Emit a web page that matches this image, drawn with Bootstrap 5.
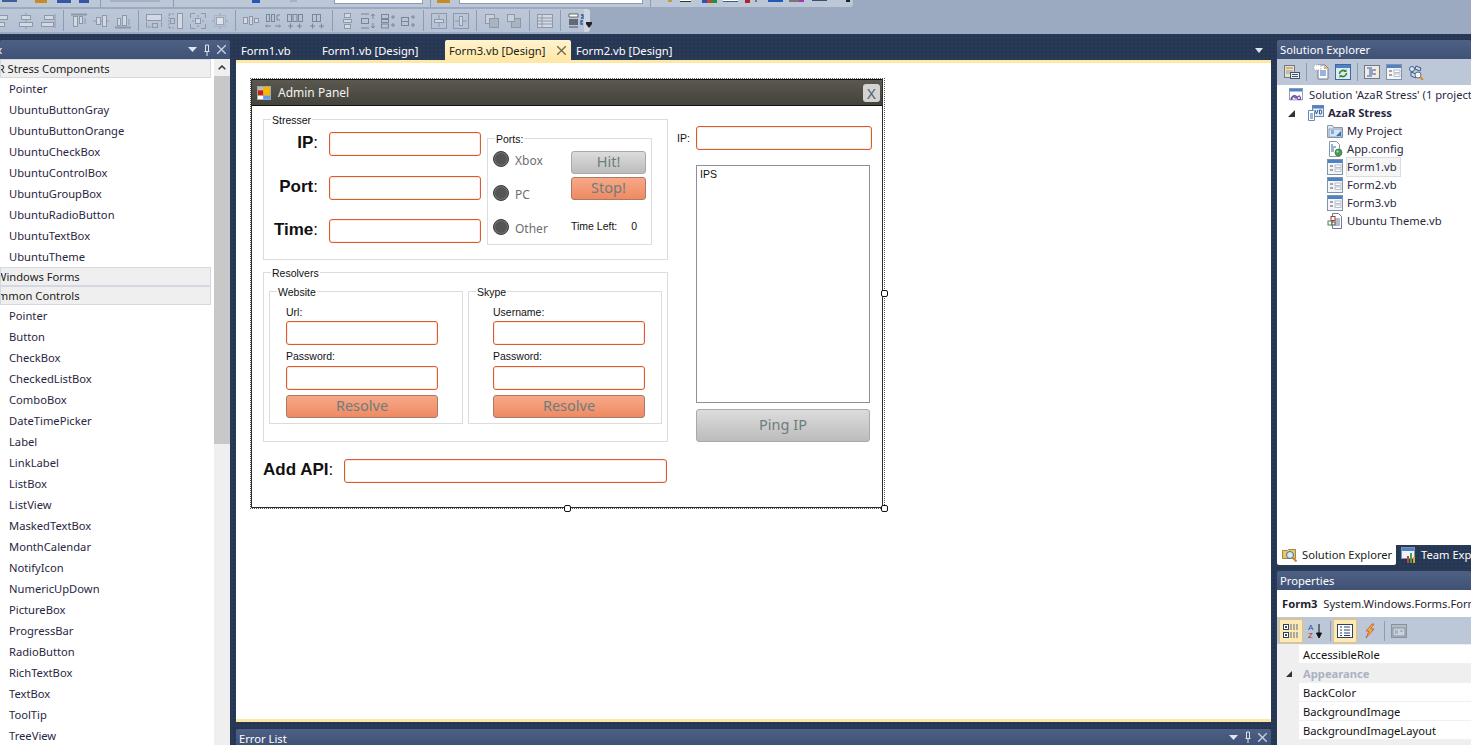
<!DOCTYPE html>
<html lang="en">
<head>
<meta charset="UTF-8">
<title>AzaR Stress - Form3.vb [Design]</title>
<link href="https://cdn.jsdelivr.net/npm/bootstrap@5.3.0/dist/css/bootstrap.min.css" rel="stylesheet">
<style>
html,body{height:745px;overflow:hidden}
body{background:#293a56;font:11.2px/1.2 "Noto Sans",sans-serif;color:#1e1e2e}
svg{display:block;flex:none}

/* top toolbars */
.top-area{height:34px;background:#9caac1;flex:none}
.strip-one{height:7px;width:853px;background:#bcc7d8;border-radius:0 0 3px 0;overflow:hidden;align-items:flex-start}
.strip-one i{display:block;flex:none;height:3px}
.strip-one .one-sep{width:1px;height:7px;background:#8e9cb3}
.strip-one .one-white{height:4px;background:#fff;border:1px solid #8e9cb3;border-top:0}
.s1{width:15px;margin-left:2px;background:#3a5f9a}.strip-one .s1{height:2px}
.s2{width:12px;margin-left:18px;background:#c88a23}
.s3{width:14px;margin-left:10px;background:#3557a5}
.s4{width:10px;margin-left:8px;background:#3557a5}
.s5{margin-left:11px}
.s6{width:50px;margin-left:9px;background:#a5b0c4}.strip-one .s6{height:2px}
.s7{margin-left:13px}
.s8{width:8px;margin-left:78px;background:#2557b8}
.s9{width:7px;margin-left:30px;background:#a5b0c4}.strip-one .s9{height:2px}
.s10{width:89px;margin-left:37px}
.s11{margin-left:7px}
.s12{width:13px;margin-left:6px;background:#c88a23}
.s13{width:184px;margin-left:9px}
.s14{margin-left:7px}
.s15{width:4px;margin-left:17px;background:#c79a45}.strip-one .s15{height:2px}
.s16{width:11px;margin-left:8px;background:#fff;border-bottom:1px solid #333}.strip-one .s16{height:2px}
.s17{width:15px;margin-left:11px;background:linear-gradient(90deg,#2557b8 30%,#d63d2e 30% 60%,#2e8b3e 60%)}
.s18{width:15px;margin-left:6px;background:#fff;border-bottom:1px solid #3b5a8f}.strip-one .s18{height:2px}
.s19{width:5px;margin-left:7px;background:#b3222a}
.s20{width:2px;margin-left:5px;background:#777}.strip-one .s20{height:2px}
.s21{width:15px;margin-left:11px;background:#2557b8}.strip-one .s21{height:2px}
.s22{width:15px;margin-left:6px;background:linear-gradient(90deg,#777 65%,#a23aa0 65%)}.strip-one .s22{height:2px}
.s23{width:15px;margin-left:8px;background:#3b4f75}.strip-one .s23{height:1px}
.s24{width:4px;margin-left:19px;background:#222}.strip-one .s24{height:2px}
.strip-two{height:23px;width:590px;margin-top:2px;background:linear-gradient(#bcc7d8,#b5c1d4);border-radius:0 3px 3px 0;align-items:center}
.tb-sep{width:1px;height:21px;background:#8e9cb3;flex:none;margin:0 7px}
.tb-group{gap:6px}
.tb-first{margin-left:-4px}
.tb-tight{gap:4px}
.tb-more{width:10px;margin-left:auto;align-self:stretch;background:#cdd5e2;border-radius:0 3px 3px 0;position:relative}
.tb-more:after{content:"";position:absolute;left:2px;bottom:4px;border:3px solid transparent;border-top:4px solid #222;border-bottom:0;box-shadow:0 -2px 0 #222}

/* docked windows */
.main-area{flex:1;padding-top:6px;gap:6px;min-height:0;background-image:radial-gradient(#243350 1px,transparent 1px);background-size:4px 4px}
.pane-head{height:19px;background:linear-gradient(#4e6185,#3f5275);color:#fff;line-height:19px;padding-left:3px;border-radius:2px 2px 0 0;flex:none;overflow:hidden;white-space:nowrap}
.pane-tools{gap:6px;margin-left:auto;padding-right:4px;color:#dfe5ee}
.left-pane{width:230px;flex:none}
.tbx-head{padding-left:0}
.tbx-head span{margin-left:-39px}
.tbx-body{min-height:0}
.tbx-list{width:214px;overflow:hidden;background:#fff}
.tbx-group{height:19px;width:211px;line-height:17px;background:#efefef;border:1px solid #d4d8e2;white-space:nowrap;overflow:hidden;color:#222}
.tbx-group span{display:block}
.cut-azar{margin-left:-22px}
.cut-win{margin-left:-5px}
.cut-common{margin-left:-17px}
.tbx-item{height:21px;line-height:21px;padding-left:9px;color:#29263f}
.tbx-scroll{width:16px;background:#efefef}
.tbx-scroll-btn{height:17px;background:#efefef}
.tbx-scroll-thumb{height:368px;background:#c8c8c8}

/* designer */
.center-pane{width:1035px;flex:none}
.doc-tabs{height:20px;color:#fff}
.doc-tab{padding:0 5px;line-height:21px;white-space:nowrap}
.tab-a{width:81px}
.tab-b{width:128px}
.doc-tab-on{width:126px;padding-left:4px;background:linear-gradient(#fff3cf,#ffe8a6);color:#1b1b1b;border-radius:2px 2px 0 0;justify-content:space-between;padding-right:5px}
.doc-body{flex:1;background:#fff;border-top:3px solid #ffe8a6;border-bottom:3px solid #ffe8a6;padding:15px 0 0 14px;min-height:0}
.err-head{margin-top:7px;height:16px;line-height:20px;border-radius:2px 2px 0 0}

.form-sel{width:635px;height:431px;border:1px dotted #555;position:relative}
.grip{position:absolute;width:7px;height:7px;background:#fff;border:1px solid #111;border-radius:2px}
.grip-r{right:-4px;top:211px}
.grip-b{left:313px;bottom:-4px}
.grip-c{right:-4px;bottom:-4px}
.form-win{height:429px;width:632px;border:1px solid #2d2d2d;border-top:0;font-family:"Liberation Sans",sans-serif;font-size:10.5px;color:#111}
.form-title{height:27px;flex:none;background:linear-gradient(#5a584f,#44433c);border:1px solid #111;border-width:1px 0 1px 0;color:#f2f2f2;font:12px "Noto Sans",sans-serif;padding:0 2px 0 5px;gap:7px}
.form-x{width:17px;height:18px;margin-left:auto;background:#d3d3d0;border-radius:3px;color:#4f6273;font:15px/18px "Noto Sans",sans-serif;text-align:center}
.form-left{width:405px;margin-left:11px}
.grp-box{border:1px solid #dcdcdc;position:relative}
.grp-tag{position:absolute;left:7px;top:-6px;background:#fff;padding:0 1px;line-height:12px;white-space:nowrap}
.box-stress{height:141px;margin-top:13px}
.stress-col{padding-top:12px}
.box-ports{width:165px;height:107px;margin:18px 0 0 6px}
.box-resolve{height:170px;margin-top:12px;padding:18px 5px 0}
.box-sub{width:194px;height:133px;padding-left:16px;padding-top:15px}
.box-sub + .box-sub{margin-left:5px;padding-left:24px}
.big-label{font-weight:700;font-size:17px;width:54px;text-align:right;white-space:nowrap;margin-top:-2px}
.big-label span{font-weight:400}
.orange-input.form-control{height:24px;min-height:0;padding:0 4px;border:1.5px solid #dc5a2c;border-radius:3px;box-shadow:inset 0 0 0 1px #fde9e1;font-size:11px}
.w-input{width:152px}
.w-api{width:323px}
.w-ip{width:176px}
.stress-row{align-items:center;gap:11px}
.row-port{margin-top:20px}
.row-time{margin-top:19px}
.ports-left{width:83px;padding:12px 0 0 5px;gap:18px}
.radio-row{height:16px;gap:6px;align-items:center;color:#6e6e6e;font:12px "Noto Sans",sans-serif}
.radio-row span{padding-top:2px}
.radio-dot{width:16px;height:16px;border-radius:50%;background:#555;border:1px solid #3c3c3c;box-shadow:inset 0 0 0 1px #777}
.ports-right{padding-top:12px;width:77px}
.ui-btn.btn{padding:0 0 2px;border-radius:3px;color:#6d7d7d;font:14.5px/1 "Noto Sans",sans-serif;display:block}
.ui-btn.btn:hover{color:#6d7d7d}
.btn-gray.btn{background:linear-gradient(#dcdcdc,#bcbcbc);border:1px solid #a9a9a9}
.btn-orange.btn{background:linear-gradient(#f8a888,#ee8a63);border:1px solid #a97b66}
.btn-port{width:75px;height:23px}
.btn-stop{margin-top:3px}
.btn-res{width:152px;height:23px;margin-top:5px}
.btn-ping{width:174px;height:33px;margin-left:19px}
.time-left{margin-top:20px;line-height:13px}
.time-left span + span{margin-left:14px}
.sub-label{height:11px;line-height:11px;margin-bottom:3px}
.label-2{margin-top:6px;margin-bottom:4px}
.api-row{margin-top:17px}
.api-label{font-size:17px;font-weight:700;width:81px;white-space:nowrap;margin-top:-2px}
.api-label span{font-weight:400}
.form-right{margin-left:9px;width:196px}
.ip-row{margin-top:20px}
.ip-label{width:19px}
.ips-box{width:174px;height:238px;margin:15px 0 6px 19px;border:1px solid #8a8f99;padding:2px 3px;line-height:13px}

/* right side */
.right-pane{width:194px;flex:none}
.sol-tools{height:26px;background:#bcc7d8;gap:6px;padding-left:7px}
.tool-line{width:1px;height:18px;background:#8e9cb3}
.sol-tree{height:460px;background:#fff;padding-top:1px;white-space:nowrap;overflow:hidden}
.tree-row{height:18px;line-height:18px;gap:4px;color:#2a2840;align-items:center}
.tree-root{padding-left:11px;gap:5px}
.tree-proj{margin-left:8px}
.tree-root b{margin-left:-1px}
.tree-leaf{padding-left:50px}
.tree-sel{background:#f6f6f6;outline:1px solid #ddd;padding-right:3px}
.sol-tabs{height:20px;color:#fff;white-space:nowrap;overflow:hidden}
.sol-tab{gap:4px;padding:0 4px 0 5px;line-height:20px;flex:none}
.sol-tab-on{background:#fff;color:#1b1b1b;width:119px;border-radius:0 0 2px 2px}
.prop-head{margin-top:6px}
.prop-obj{height:27px;line-height:27px;background:#fff;padding-left:5px;white-space:nowrap;overflow:hidden}
.prop-tools{height:27px;background:#bcc7d8;gap:3px;padding-left:3px}
.prop-on{background:#fde9b3;outline:1px solid #e6c272;height:22px;width:22px;justify-content:center}
.prop-off{height:22px;width:22px;justify-content:center}
.prop-line{width:1px;height:20px;background:#8e9cb3}
.prop-grid{flex:1;background:#efefef;padding-top:1px}
.prop-row{height:19px;line-height:19px;margin-left:22px;background:#fff;border-bottom:1px solid #f0f0f0;padding-left:4px;white-space:nowrap;color:#111}
.prop-cat{background:#efefef;color:#a9b2c3;font-weight:700;margin-left:0;padding-left:26px;position:relative}
.prop-cat:before{content:"";position:absolute;left:9px;top:7px;border:3px solid transparent;border-right:3px solid #333;border-bottom:3px solid #333}
</style>
</head>
<body class="d-flex flex-column">

<svg width="0" height="0" class="position-absolute">
  <defs>
    <!-- layout toolbar -->
    <symbol id="t-left" viewBox="0 0 16 16"><g fill="none" stroke="#8d98a8"><path d="M1 1v14"/><rect x="2.5" y="2.5" width="9" height="4" fill="#d3d9e2"/><rect x="2.5" y="9.5" width="6" height="4" fill="#d3d9e2"/></g></symbol>
    <symbol id="t-mid" viewBox="0 0 16 16"><g fill="none" stroke="#8d98a8"><path d="M8 0v16"/><rect x="3.5" y="2.5" width="9" height="4" fill="#d3d9e2"/><rect x="1.5" y="9.5" width="13" height="4" fill="#d3d9e2"/></g></symbol>
    <symbol id="t-right" viewBox="0 0 16 16"><g fill="none" stroke="#8d98a8"><path d="M15 1v14"/><rect x="4.5" y="2.5" width="9" height="4" fill="#d3d9e2"/><rect x="1.5" y="9.5" width="12" height="4" fill="#d3d9e2"/></g></symbol>
    <symbol id="t-top" viewBox="0 0 16 16"><g fill="none" stroke="#8d98a8"><path d="M0 1.5h16" stroke-width="2"/><rect x="2.5" y="3.5" width="4" height="10" fill="#d3d9e2"/><rect x="8.5" y="3.5" width="3" height="7" fill="#d3d9e2"/><path d="M14 11V5"/></g></symbol>
    <symbol id="t-vmid" viewBox="0 0 16 16"><g fill="none" stroke="#8d98a8"><path d="M0 8h16"/><rect x="3.5" y="4.5" width="4" height="7" fill="#d3d9e2"/><rect x="9.5" y="2.5" width="4" height="11" fill="#d3d9e2"/></g></symbol>
    <symbol id="t-bot" viewBox="0 0 16 16"><g fill="none" stroke="#8d98a8"><path d="M0 14.5h16" stroke-width="2"/><rect x="2.5" y="5.5" width="3" height="7" fill="#d3d9e2"/><rect x="7.5" y="2.5" width="4" height="10" fill="#d3d9e2"/><path d="M14 12V6"/></g></symbol>
    <symbol id="t-w" viewBox="0 0 16 16"><g fill="none" stroke="#8d98a8"><rect x=".5" y="1.5" width="15" height="6" fill="#d3d9e2"/><path d="M.5 9v5h5M15.5 9v5"/><rect x="6.5" y="10.5" width="5" height="4"/></g></symbol>
    <symbol id="t-h" viewBox="0 0 16 16"><g fill="none" stroke="#8d98a8"><rect x="9.5" y=".5" width="5" height="15" fill="#d3d9e2"/><path d="M1 1h5M1 15h5M1 1v14" stroke-dasharray="2 1"/><rect x="2.5" y="5.5" width="4" height="5"/></g></symbol>
    <symbol id="t-wh" viewBox="0 0 16 16"><g fill="none" stroke="#8d98a8"><path d="M.5 5V.5H5M11 .5h4.500V5M15.500 11v4.500H11M5 15.500H.5V11"/><rect x="5.500" y="5.500" width="5" height="5" fill="#d3d9e2"/><path d="M8 2v2M8 12v2M2 8h2M12 8h2"/></g></symbol>
    <symbol id="t-grid" viewBox="0 0 16 16"><g fill="none" stroke="#9aa5b5"><rect x="2.500" y="2.500" width="11" height="11" stroke-dasharray="1 1"/><rect x="4.500" y="4.500" width="7" height="7" fill="#dfe3ea"/><path d="M8 0v2M8 14v2M0 8h2M14 8h2"/></g></symbol>
    <symbol id="t-hs1" viewBox="0 0 16 16"><g fill="none" stroke="#8d98a8"><rect x=".5" y="4.500" width="4" height="6" fill="#d3d9e2"/><rect x="6.500" y="3.500" width="3" height="8" fill="#d3d9e2"/><rect x="11.500" y="5.500" width="4" height="4" fill="#d3d9e2"/></g></symbol>
    <symbol id="t-hs2" viewBox="0 0 16 16"><g fill="none" stroke="#7b8799"><rect x="1.500" y="1.500" width="3" height="7"/><rect x="6.500" y="1.500" width="3" height="7"/><path d="M15 2h-3v5h3M1 13h5M10 13h5M2 11.500l-1.500 1.500 1.500 1.500M14 11.500l1.500 1.500-1.500 1.500"/></g></symbol>
    <symbol id="t-hs3" viewBox="0 0 16 16"><g fill="none" stroke="#7b8799"><rect x=".5" y="1.500" width="4" height="7"/><rect x="6" y="1.500" width="4" height="7"/><rect x="11.500" y="1.500" width="4" height="7"/><path d="M1 13h5M3.500 10.500v5M10 13h5M12.500 10.500v5"/></g></symbol>
    <symbol id="t-hs4" viewBox="0 0 16 16"><g fill="none" stroke="#7b8799"><rect x="3.500" y="1.500" width="4" height="7"/><rect x="7.500" y="1.500" width="4" height="7"/><path d="M1 13h5M3.500 10.500v5M10 13h5M12.500 10.500v5"/></g></symbol>
    <symbol id="t-vs1" viewBox="0 0 16 16"><g fill="none" stroke="#8d98a8"><rect x="4.500" y=".5" width="6" height="4" fill="#d3d9e2"/><rect x="3.500" y="6.500" width="8" height="3" fill="#d3d9e2"/><rect x="4.500" y="11.500" width="6" height="4" fill="#d3d9e2"/></g></symbol>
    <symbol id="t-vs2" viewBox="0 0 16 16"><g fill="none" stroke="#7b8799"><path d="M1 1h8M1 15h8"/><rect x="1.500" y="5.500" width="7" height="5"/><path d="M13 1v5M13 10v5M11 3l2-2 2 2M11 13l2 2 2-2"/></g></symbol>
    <symbol id="t-vs3" viewBox="0 0 16 16"><g fill="none" stroke="#7b8799"><rect x="1.500" y="1.500" width="7" height="4"/><rect x="1.500" y="6.500" width="7" height="3"/><rect x="1.500" y="11" width="7" height="4"/><path d="M11 4h4M13 2v4M11 12h4M13 10v4"/></g></symbol>
    <symbol id="t-vs4" viewBox="0 0 16 16"><g fill="none" stroke="#7b8799"><rect x="1.500" y="4.500" width="7" height="4"/><rect x="1.500" y="8.500" width="7" height="4"/><path d="M11 4h4M13 2v4M11 12h4M13 10v4"/></g></symbol>
    <symbol id="t-cv" viewBox="0 0 16 16"><g fill="none" stroke="#8d98a8"><rect x=".5" y=".5" width="15" height="15"/><path d="M8 2v12"/><rect x="3.500" y="6.500" width="9" height="3" fill="#d3d9e2"/></g></symbol>
    <symbol id="t-ch" viewBox="0 0 16 16"><g fill="none" stroke="#8d98a8"><rect x=".5" y=".5" width="15" height="15"/><path d="M2 8h12"/><rect x="6.500" y="3.500" width="3" height="9" fill="#d3d9e2"/></g></symbol>
    <symbol id="t-front" viewBox="0 0 16 16"><g stroke="#8d98a8" fill="#c9d0da"><rect x="1.500" y="1.500" width="9" height="9"/><rect x="5.500" y="5.500" width="9" height="9" fill="#aab3c0"/></g></symbol>
    <symbol id="t-back" viewBox="0 0 16 16"><g stroke="#8d98a8" fill="#aab3c0"><rect x="5.500" y="5.500" width="9" height="9"/><rect x="1.500" y="1.500" width="7" height="7" fill="#c9d0da"/></g></symbol>
    <symbol id="t-tab" viewBox="0 0 16 16"><g fill="#d3d9e2" stroke="#8d98a8"><rect x=".5" y="1.500" width="15" height="13"/><path d="M.5 5h15M.5 8h15M.5 11h15M5 1.500v13" fill="none"/></g></symbol>
    <symbol id="t-tabs" viewBox="0 0 16 16"><path d="M1 1h9v3H1z" fill="#fff" stroke="#333" stroke-width=".7"/><path d="M1 7h9M1 9h9M1 11h9" stroke="#111"/><path d="M1 14h9" stroke="#456"/><path d="M13 2h2v3h-2M15 8h-2v3h2" fill="none" stroke="#2a5aa0" stroke-width="1.300"/></symbol>
    <!-- solution explorer -->
    <symbol id="i-form" viewBox="0 0 16 16"><rect x=".5" y=".5" width="15" height="15" fill="#f4f5f8" stroke="#7f93ad"/><rect x="1" y="1" width="14" height="3" fill="#4e82c4"/><path d="M3 7h3M3 11h3" stroke="#555"/><rect x="8" y="6" width="6" height="2.500" fill="#fff" stroke="#8b97aa" stroke-width=".6"/><rect x="8" y="10" width="6" height="2.500" fill="#fff" stroke="#8b97aa" stroke-width=".6"/></symbol>
    <symbol id="i-sol" viewBox="0 0 16 16"><rect x=".5" y=".5" width="15" height="13" fill="#fff" stroke="#7f93ad"/><rect x="1" y="1" width="14" height="3" fill="#4e82c4"/><path d="M3 11c2-4 4 2 6 0s3-3 4 0-3 3-4 0-4-3-6 0 2 2 0 0z" fill="none" stroke="#6b3fa0" stroke-width="1.400"/></symbol>
    <symbol id="i-proj" viewBox="0 0 16 16"><rect x="4.500" y=".5" width="11" height="11" fill="#e9eef6" stroke="#6c87ab"/><rect x="5" y="1" width="10" height="2.500" fill="#4e82c4"/><path d="M7 5l1.500 4L10 5M11.500 5v4h1.500c1 0 1-2 0-2 1 0 1-2 0-2z" fill="none" stroke="#1d4f91" stroke-width=".9"/><path d="M.5 5.500h5l1 1v9h-6z" fill="#fff" stroke="#6c87ab"/><path d="M2 9h3M2 11h3M2 13h3" stroke="#2f6db8"/></symbol>
    <symbol id="i-folder" viewBox="0 0 16 16"><path d="M.5 2.500h5l1 2h9v10H.5z" fill="#e4e7ec" stroke="#8f98a5"/><rect x="2" y="6" width="13" height="8" fill="#d6e3f4" stroke="#6c87ab" stroke-width=".7"/><path d="M9 13l5-5v5z" fill="#3a74bd"/><path d="M4 8h3M4 10h3" stroke="#3a74bd"/></symbol>
    <symbol id="i-cfg" viewBox="0 0 16 16"><path d="M2.500.5h7l3 3v12h-10z" fill="#fff" stroke="#8a97ab"/><path d="M4 4h2M4 6h5M4 8h3M4 10h3" stroke="#2f6db8"/><circle cx="11.500" cy="11.500" r="3.500" fill="#4d9b55" stroke="#2e6c3d" stroke-width=".7"/><circle cx="10.500" cy="10.500" r="1" fill="#bfe6c1"/></symbol>
    <symbol id="i-theme" viewBox="0 0 16 16"><path d="M5.500.5h6l3 3v12h-9z" fill="#fff" stroke="#6d7c93"/><path d="M8 6h5M8 8h5M8 10h5M8 12h5" stroke="#6d7c93"/><rect x="4" y="3.500" width="4" height="4" fill="#fff" stroke="#b8342d"/><rect x="1" y="8" width="4" height="4" fill="#fff" stroke="#3d8f4a"/><rect x="5" y="9" width="3" height="3" fill="#fff" stroke="#555"/></symbol>
    <symbol id="s-props" viewBox="0 0 16 16"><rect x=".5" y="1.500" width="10" height="12" fill="#eadfc6" stroke="#6c7a8f"/><path d="M2 4h7" stroke="#c08a2e"/><path d="M2 7h7M2 9h7" stroke="#99a"/><rect x="6.500" y="8.500" width="9" height="6" fill="#eef2f8" stroke="#44536a"/><path d="M8 10.500h6M8 12.500h6" stroke="#44536a"/></symbol>
    <symbol id="s-all" viewBox="0 0 16 16"><path d="M5 1h7l3 3v11H5z" fill="#fff" stroke="#6c7a8f"/><path d="M7 7h6M7 9h6M7 11h6" stroke="#2f6db8"/><rect x="1" y="1" width="7" height="5" fill="#fff" stroke="#aaa" stroke-dasharray="1 1"/><path d="M11 1l4 4h-4z" fill="#e3b24e"/></symbol>
    <symbol id="s-ref" viewBox="0 0 16 16"><rect x=".5" y=".5" width="15" height="15" fill="#dfeaf7" stroke="#41679a"/><rect x="1" y="1" width="14" height="3" fill="#4e82c4"/><path d="M4.500 10a3.500 3.500 0 0 1 6-2.500M11.500 9a3.500 3.500 0 0 1-6 2.500" fill="none" stroke="#2e8b2e" stroke-width="1.600"/><path d="M11.500 5v3h-3zM4.500 14v-3h3z" fill="#2e8b2e"/></symbol>
    <symbol id="s-code" viewBox="0 0 16 16"><rect x=".5" y="1.500" width="15" height="13" fill="#f4ecd9" stroke="#6c7a8f"/><path d="M3 4h5M5 6h7M5 8h4M5 10h7M3 12h5" stroke="#2b57c4"/></symbol>
    <symbol id="s-class" viewBox="0 0 16 16"><path d="M8 2l5 2-1 3-5-2zM3 8l5 2v4l-5-2z" fill="#cdd9ea" stroke="#3f5c86"/><circle cx="4" cy="5" r="2.500" fill="#dfe9f5" stroke="#3f5c86"/><circle cx="10" cy="11" r="3" fill="#f4f4f4" stroke="#5d6d84"/><path d="M12 13l3 3" stroke="#d98a1f" stroke-width="2"/></symbol>
    <symbol id="s-team" viewBox="0 0 16 16"><rect x=".5" y=".5" width="13" height="11" fill="#eef3f9" stroke="#7f93ad"/><rect x="1" y="1" width="12" height="3" fill="#4e82c4"/><rect x="6" y="9" width="2" height="7" fill="#d63d2e"/><rect x="9" y="6" width="2" height="10" fill="#3fa34d"/><rect x="12" y="10" width="2" height="6" fill="#e9a21f"/></symbol>
    <symbol id="s-mag" viewBox="0 0 16 16"><path d="M.5 3.500h5l1-1h7v9H.5z" fill="#e7c66f" stroke="#a68737"/><circle cx="8" cy="8" r="3.500" fill="#d6e8f7" stroke="#4a6b92"/><path d="M10.500 10.500l4 4" stroke="#c98a25" stroke-width="2"/></symbol>
    <symbol id="p-cat" viewBox="0 0 16 16"><rect x=".5" y="1.500" width="5" height="5" fill="#fff" stroke="#28406b"/><rect x=".5" y="9.500" width="5" height="5" fill="#fff" stroke="#28406b"/><path d="M2 4h2M3 3v2M2 12h2M3 11v2" stroke="#111"/><path d="M7 2h8M7 4h8M7 6h8M7 10h8M7 12h8M7 14h8" stroke="#5b6a80" stroke-dasharray="2 1"/></symbol>
    <symbol id="p-az" viewBox="0 0 16 16"><text x="0" y="7" font-size="8" font-family="Liberation Sans" fill="#2550a8">A</text><text x="0" y="15" font-size="8" font-family="Liberation Sans" fill="#b22">Z</text><path d="M11 1v12M8.500 10l2.500 5 2.500-5z" fill="#111" stroke="#111"/></symbol>
    <symbol id="p-list" viewBox="0 0 16 16"><rect x=".5" y="1.500" width="15" height="13" fill="#fff" stroke="#28406b"/><path d="M3 4h2M7 4h6M3 7h2M7 7h6M3 10h2M7 10h6M3 12.500h2M7 12.500h6" stroke="#28406b"/></symbol>
    <symbol id="p-bolt" viewBox="0 0 16 16"><path d="M10 1L4 8h3l-3 7 8-9H8.500L12 1z" fill="#e9b43a" stroke="#c9542b" stroke-width=".8"/></symbol>
    <symbol id="p-page" viewBox="0 0 16 16"><rect x=".5" y="1.500" width="15" height="13" fill="#b3bac4" stroke="#8791a0"/><rect x="2" y="5" width="12" height="8" fill="#ccd2db" stroke="#8791a0"/><path d="M4 8h3M9 8h3M4 10h3" stroke="#8791a0"/></symbol>
    <symbol id="f-logo" viewBox="0 0 16 16"><rect x=".5" y=".5" width="15" height="15" fill="#bbb" stroke="#aaa"/><rect x="1" y="5" width="7" height="6" fill="#c2231c"/><rect x="7" y="1" width="8" height="10" fill="#f2b705"/><rect x="7" y="11" width="8" height="4" fill="#5f9df0"/><rect x="1" y="11" width="6" height="4" fill="#fff"/></symbol>
  </defs>
</svg>

<!-- toolbars -->
<div class="top-area">
  <div class="strip-one d-flex">
    <i class="s1"></i><i class="s2"></i><i class="s3"></i><i class="s4"></i>
    <i class="one-sep s5"></i><i class="s6"></i><i class="one-sep s7"></i>
    <i class="s8"></i><i class="s9"></i><i class="one-white s10"></i>
    <i class="one-sep s11"></i><i class="s12"></i><i class="one-white s13"></i>
    <i class="one-sep s14"></i><i class="s15"></i><i class="s16"></i><i class="s17"></i>
    <i class="s18"></i><i class="s19"></i><i class="s20"></i><i class="s21"></i>
    <i class="s22"></i><i class="s23"></i><i class="s24"></i>
  </div>
  <div class="strip-two d-flex">
    <div class="d-flex tb-group tb-first">
      <svg width="16" height="16"><use href="#t-left"/></svg>
      <svg width="16" height="16"><use href="#t-mid"/></svg>
      <svg width="16" height="16"><use href="#t-right"/></svg>
    </div>
    <div class="tb-sep"></div>
    <div class="d-flex tb-group">
      <svg width="16" height="16"><use href="#t-top"/></svg>
      <svg width="16" height="16"><use href="#t-vmid"/></svg>
      <svg width="16" height="16"><use href="#t-bot"/></svg>
    </div>
    <div class="tb-sep"></div>
    <div class="d-flex tb-group">
      <svg width="16" height="16"><use href="#t-w"/></svg>
      <svg width="16" height="16"><use href="#t-h"/></svg>
      <svg width="16" height="16"><use href="#t-wh"/></svg>
      <svg width="16" height="16"><use href="#t-grid"/></svg>
    </div>
    <div class="tb-sep"></div>
    <div class="d-flex tb-group">
      <svg width="16" height="16"><use href="#t-hs1"/></svg>
      <svg width="16" height="16"><use href="#t-hs2"/></svg>
      <svg width="16" height="16"><use href="#t-hs3"/></svg>
      <svg width="16" height="16"><use href="#t-hs4"/></svg>
    </div>
    <div class="tb-sep"></div>
    <div class="d-flex tb-tight">
      <svg width="16" height="16"><use href="#t-vs1"/></svg>
      <svg width="16" height="16"><use href="#t-vs2"/></svg>
      <svg width="16" height="16"><use href="#t-vs3"/></svg>
      <svg width="16" height="16"><use href="#t-vs4"/></svg>
    </div>
    <div class="tb-sep"></div>
    <div class="d-flex tb-group">
      <svg width="16" height="16"><use href="#t-cv"/></svg>
      <svg width="16" height="16"><use href="#t-ch"/></svg>
    </div>
    <div class="tb-sep"></div>
    <div class="d-flex tb-group">
      <svg width="16" height="16"><use href="#t-front"/></svg>
      <svg width="16" height="16"><use href="#t-back"/></svg>
    </div>
    <div class="tb-sep"></div>
    <svg width="16" height="16"><use href="#t-tab"/></svg>
    <div class="tb-sep"></div>
    <svg width="16" height="16"><use href="#t-tabs"/></svg>
    <div class="tb-more"></div>
  </div>
</div>

<div class="main-area d-flex">
  <!-- toolbox -->
  <div class="left-pane d-flex flex-column">
    <div class="pane-head tbx-head d-flex">
      <span>Toolbox</span>
      <div class="pane-tools d-flex align-items-center">
        <svg width="9" height="5" viewBox="0 0 9 5"><path d="M0 0h9L4.500 5z" fill="#dfe5ee"/></svg>
        <svg width="8" height="12" viewBox="0 0 8 12"><path d="M1.500 7.500h5M2.500 1h3v6.500h-3zM4 8v4" fill="none" stroke="#dfe5ee"/></svg>
        <svg width="9" height="9" viewBox="0 0 9 9"><path d="M0 0l9 9M9 0L0 9" stroke="#c6cfdd" stroke-width="1.400"/></svg>
      </div>
    </div>
    <div class="d-flex flex-fill tbx-body">
      <div class="tbx-list">
        <div class="tbx-group"><span class="cut-azar">AzaR Stress Components</span></div>
        <div class="tbx-item">Pointer</div>
        <div class="tbx-item">UbuntuButtonGray</div>
        <div class="tbx-item">UbuntuButtonOrange</div>
        <div class="tbx-item">UbuntuCheckBox</div>
        <div class="tbx-item">UbuntuControlBox</div>
        <div class="tbx-item">UbuntuGroupBox</div>
        <div class="tbx-item">UbuntuRadioButton</div>
        <div class="tbx-item">UbuntuTextBox</div>
        <div class="tbx-item">UbuntuTheme</div>
        <div class="tbx-group"><span class="cut-win">Windows Forms</span></div>
        <div class="tbx-group"><span class="cut-common">Common Controls</span></div>
        <div class="tbx-item">Pointer</div>
        <div class="tbx-item">Button</div>
        <div class="tbx-item">CheckBox</div>
        <div class="tbx-item">CheckedListBox</div>
        <div class="tbx-item">ComboBox</div>
        <div class="tbx-item">DateTimePicker</div>
        <div class="tbx-item">Label</div>
        <div class="tbx-item">LinkLabel</div>
        <div class="tbx-item">ListBox</div>
        <div class="tbx-item">ListView</div>
        <div class="tbx-item">MaskedTextBox</div>
        <div class="tbx-item">MonthCalendar</div>
        <div class="tbx-item">NotifyIcon</div>
        <div class="tbx-item">NumericUpDown</div>
        <div class="tbx-item">PictureBox</div>
        <div class="tbx-item">ProgressBar</div>
        <div class="tbx-item">RadioButton</div>
        <div class="tbx-item">RichTextBox</div>
        <div class="tbx-item">TextBox</div>
        <div class="tbx-item">ToolTip</div>
        <div class="tbx-item">TreeView</div>
      </div>
      <div class="tbx-scroll">
        <div class="tbx-scroll-btn d-flex align-items-center justify-content-center">
          <svg width="8" height="5" viewBox="0 0 8 5"><path d="M.7 4.300L4 1l3.300 3.300" fill="none" stroke="#333" stroke-width="1.500"/></svg>
        </div>
        <div class="tbx-scroll-thumb"></div>
      </div>
    </div>
  </div>

  <!-- designer -->
  <div class="center-pane d-flex flex-column">
    <div class="doc-tabs d-flex">
      <div class="doc-tab tab-a">Form1.vb</div>
      <div class="doc-tab tab-b">Form1.vb [Design]</div>
      <div class="doc-tab doc-tab-on d-flex align-items-center">
        <span>Form3.vb [Design]</span>
        <svg width="9" height="9" viewBox="0 0 9 9"><path d="M0 0l9 9M9 0L0 9" stroke="#6f6650" stroke-width="1.300"/></svg>
      </div>
      <div class="doc-tab">Form2.vb [Design]</div>
      <svg class="ms-auto me-2 mt-2" width="8" height="5" viewBox="0 0 8 5"><path d="M0 0h8L4 5z" fill="#dfe5ee"/></svg>
    </div>
    <div class="doc-body">
      <div class="form-sel">
        <div class="form-win d-flex flex-column">
          <div class="form-title d-flex align-items-center">
            <svg width="14" height="14"><use href="#f-logo"/></svg>
            <span>Admin Panel</span>
            <div class="form-x">X</div>
          </div>
          <div class="d-flex">
            <div class="form-left">
              <div class="grp-box box-stress d-flex">
                <div class="grp-tag">Stresser</div>
                <div class="d-flex flex-column stress-col">
                  <div class="stress-row d-flex"><div class="big-label">IP<span>:</span></div><input class="form-control orange-input w-input" type="text"></div>
                  <div class="stress-row row-port d-flex"><div class="big-label">Port<span>:</span></div><input class="form-control orange-input w-input" type="text"></div>
                  <div class="stress-row row-time d-flex"><div class="big-label">Time<span>:</span></div><input class="form-control orange-input w-input" type="text"></div>
                </div>
                <div class="grp-box box-ports d-flex">
                  <div class="grp-tag">Ports:</div>
                  <div class="ports-left d-flex flex-column">
                    <div class="radio-row d-flex"><div class="radio-dot"></div><span>Xbox</span></div>
                    <div class="radio-row d-flex"><div class="radio-dot"></div><span>PC</span></div>
                    <div class="radio-row d-flex"><div class="radio-dot"></div><span>Other</span></div>
                  </div>
                  <div class="ports-right">
                    <button class="btn ui-btn btn-gray btn-port" type="button">Hit!</button>
                    <button class="btn ui-btn btn-orange btn-port btn-stop" type="button">Stop!</button>
                    <div class="d-flex time-left"><span>Time Left:</span><span>0</span></div>
                  </div>
                </div>
              </div>
              <div class="grp-box box-resolve d-flex">
                <div class="grp-tag">Resolvers</div>
                <div class="grp-box box-sub">
                  <div class="grp-tag">Website</div>
                  <div class="sub-label">Url:</div>
                  <input class="form-control orange-input w-input" type="text">
                  <div class="sub-label label-2">Password:</div>
                  <input class="form-control orange-input w-input" type="text">
                  <button class="btn ui-btn btn-orange btn-res" type="button">Resolve</button>
                </div>
                <div class="grp-box box-sub">
                  <div class="grp-tag">Skype</div>
                  <div class="sub-label">Username:</div>
                  <input class="form-control orange-input w-input" type="text">
                  <div class="sub-label label-2">Password:</div>
                  <input class="form-control orange-input w-input" type="text">
                  <button class="btn ui-btn btn-orange btn-res" type="button">Resolve</button>
                </div>
              </div>
              <div class="d-flex align-items-center api-row">
                <div class="api-label">Add API<span>:</span></div>
                <input class="form-control orange-input w-api" type="text">
              </div>
            </div>
            <div class="form-right">
              <div class="d-flex align-items-center ip-row">
                <div class="ip-label">IP:</div>
                <input class="form-control orange-input w-ip" type="text">
              </div>
              <div class="ips-box">IPS</div>
              <button class="btn ui-btn btn-gray btn-ping" type="button">Ping IP</button>
            </div>
          </div>
        </div>
        <div class="grip grip-r"></div>
        <div class="grip grip-b"></div>
        <div class="grip grip-c"></div>
      </div>
    </div>
    <div class="pane-head err-head d-flex">
      <span>Error List</span>
      <div class="pane-tools d-flex align-items-center">
        <svg width="9" height="5" viewBox="0 0 9 5"><path d="M0 0h9L4.500 5z" fill="#dfe5ee"/></svg>
        <svg width="8" height="12" viewBox="0 0 8 12"><path d="M1.500 7.500h5M2.500 1h3v6.500h-3zM4 8v4" fill="none" stroke="#dfe5ee"/></svg>
        <svg width="9" height="9" viewBox="0 0 9 9"><path d="M0 0l9 9M9 0L0 9" stroke="#c6cfdd" stroke-width="1.400"/></svg>
      </div>
    </div>
  </div>

  <!-- solution explorer + properties -->
  <div class="right-pane d-flex flex-column">
    <div class="pane-head">Solution Explorer</div>
    <div class="sol-tools d-flex align-items-center">
      <svg width="16" height="16"><use href="#s-props"/></svg>
      <div class="tool-line"></div>
      <svg width="16" height="16"><use href="#s-all"/></svg>
      <svg width="16" height="16"><use href="#s-ref"/></svg>
      <div class="tool-line"></div>
      <svg width="16" height="16"><use href="#s-code"/></svg>
      <svg width="16" height="16"><use href="#i-form"/></svg>
      <svg width="16" height="16"><use href="#s-class"/></svg>
    </div>
    <div class="sol-tree">
      <div class="tree-row tree-root d-flex"><svg width="16" height="14"><use href="#i-sol"/></svg><span>Solution 'AzaR Stress' (1 project)</span></div>
      <div class="tree-row tree-root d-flex"><svg width="7" height="7" viewBox="0 0 7 7"><path d="M7 0v7H0z" fill="#333"/></svg><svg class="tree-proj" width="16" height="16"><use href="#i-proj"/></svg><b>AzaR Stress</b></div>
      <div class="tree-row tree-leaf d-flex"><svg width="16" height="16"><use href="#i-folder"/></svg><span>My Project</span></div>
      <div class="tree-row tree-leaf d-flex"><svg width="16" height="16"><use href="#i-cfg"/></svg><span>App.config</span></div>
      <div class="tree-row tree-leaf d-flex"><svg width="16" height="16"><use href="#i-form"/></svg><span class="tree-sel">Form1.vb</span></div>
      <div class="tree-row tree-leaf d-flex"><svg width="16" height="16"><use href="#i-form"/></svg><span>Form2.vb</span></div>
      <div class="tree-row tree-leaf d-flex"><svg width="16" height="16"><use href="#i-form"/></svg><span>Form3.vb</span></div>
      <div class="tree-row tree-leaf d-flex"><svg width="16" height="16"><use href="#i-theme"/></svg><span>Ubuntu Theme.vb</span></div>
    </div>
    <div class="sol-tabs d-flex">
      <div class="sol-tab sol-tab-on d-flex align-items-center"><svg width="16" height="16"><use href="#s-mag"/></svg><span>Solution Explorer</span></div>
      <div class="sol-tab d-flex align-items-center"><svg width="16" height="16"><use href="#s-team"/></svg><span>Team Explorer</span></div>
    </div>
    <div class="pane-head prop-head">Properties</div>
    <div class="prop-obj"><b>Form3</b>&nbsp; System.Windows.Forms.Form</div>
    <div class="prop-tools d-flex align-items-center">
      <div class="prop-on d-flex align-items-center"><svg width="16" height="16"><use href="#p-cat"/></svg></div>
      <div class="prop-off d-flex align-items-center"><svg width="16" height="16"><use href="#p-az"/></svg></div>
      <div class="prop-line"></div>
      <div class="prop-on d-flex align-items-center"><svg width="16" height="16"><use href="#p-list"/></svg></div>
      <div class="prop-off d-flex align-items-center"><svg width="16" height="16"><use href="#p-bolt"/></svg></div>
      <div class="prop-line"></div>
      <div class="prop-off d-flex align-items-center"><svg width="16" height="16"><use href="#p-page"/></svg></div>
    </div>
    <div class="prop-grid">
      <div class="prop-row">AccessibleRole</div>
      <div class="prop-row prop-cat">Appearance</div>
      <div class="prop-row">BackColor</div>
      <div class="prop-row">BackgroundImage</div>
      <div class="prop-row">BackgroundImageLayout</div>
    </div>
  </div>
</div>

<script src="https://cdn.jsdelivr.net/npm/bootstrap@5.3.0/dist/js/bootstrap.bundle.min.js"></script>
</body>
</html>
